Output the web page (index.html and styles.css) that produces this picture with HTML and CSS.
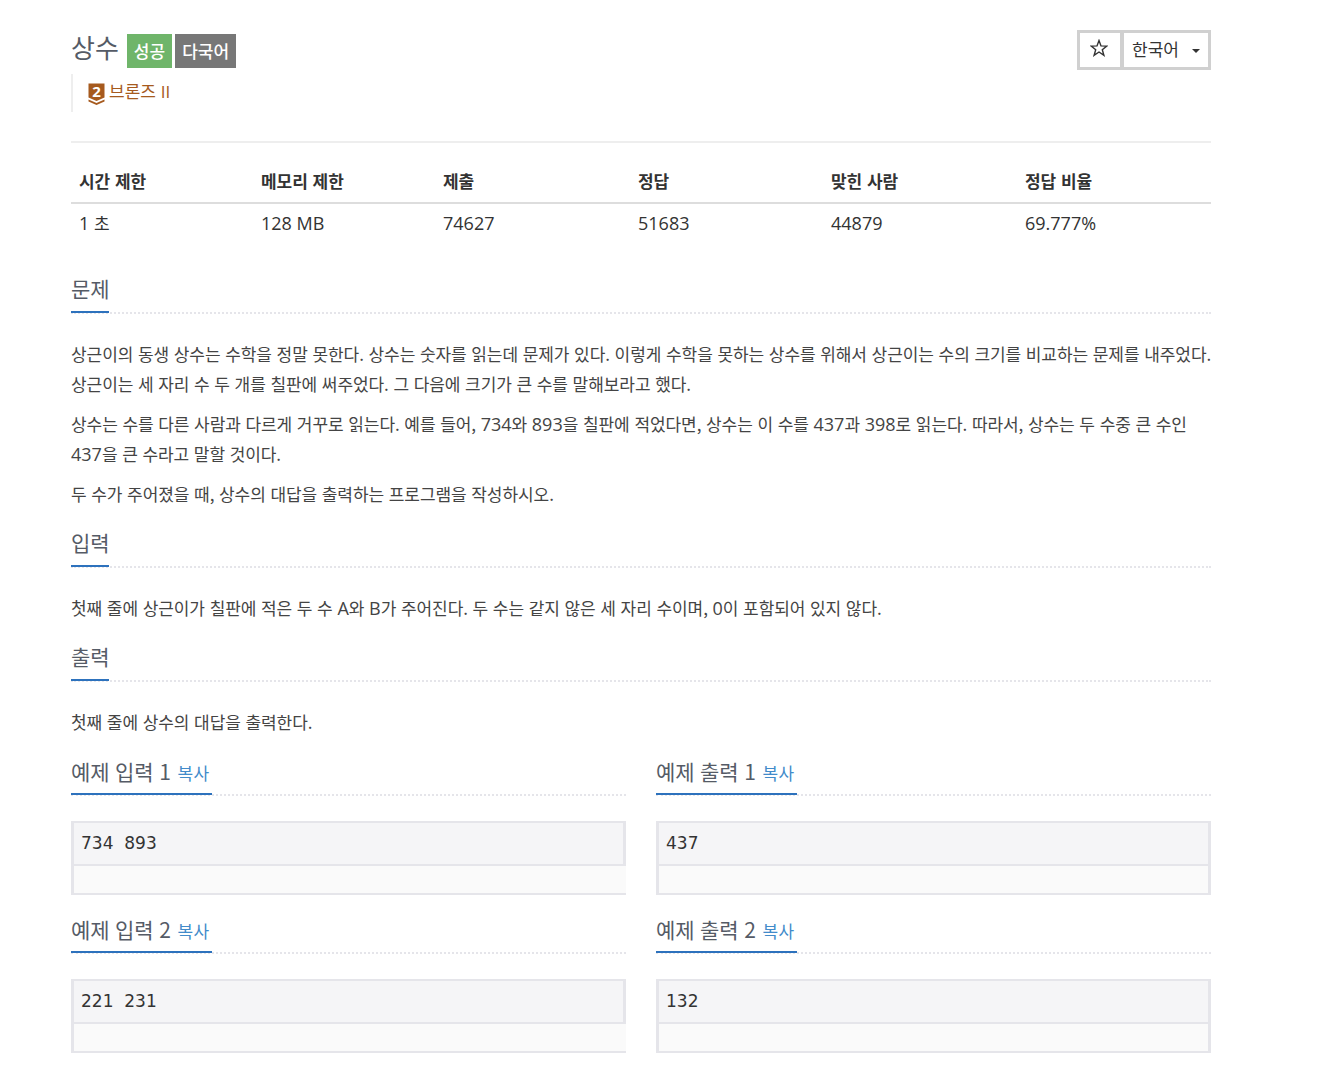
FILE: index.html
```html
<!DOCTYPE html>
<html lang="ko">
<head>
<meta charset="utf-8">
<title>상수</title>
<link rel="stylesheet" href="styles.css">
</head>
<body>
<main class="page">
  <div class="top">
    <div class="title-block">
      <div class="title-row">
        <h1 class="title">상수</h1>
        <span class="label label-success">성공</span>
        <span class="label label-gray">다국어</span>
      </div>
      <div class="tier">
        <svg class="tier-icon" viewBox="0 0 17 22" width="17" height="22" aria-hidden="true">
          <path d="M0.5 0.5H16.5V14.5L8.5 18L0.5 14.5Z" fill="#a65a1e"/>
          <path d="M0.5 16.5L8.5 20L16.5 16.5V18.5L8.5 22L0.5 18.5Z" fill="#a65a1e"/>
          <text x="8.5" y="14" class="tier-num" text-anchor="middle">2</text>
        </svg>
        <span class="tier-text">브론즈 <span class="lat">II</span></span>
      </div>
    </div>
    <div class="actions">
      <button class="btn btn-star" type="button">
        <svg viewBox="0 0 18 18" width="18" height="18" aria-hidden="true"><path d="M9 1.5L11 6.9L16.8 7.1L12.3 10.7L13.9 16.3L9 13L4.1 16.3L5.7 10.7L1.2 7.1L7 6.9Z" fill="none" stroke="#333" stroke-width="1.4" stroke-linejoin="miter"/></svg>
      </button>
      <button class="btn btn-lang" type="button">한국어<span class="caret"></span></button>
    </div>
  </div>

  <table class="info">
    <colgroup><col class="c1"><col class="c2"><col class="c3"><col class="c4"><col class="c5"><col class="c6"></colgroup>
    <thead><tr><th>시간 제한</th><th>메모리 제한</th><th>제출</th><th>정답</th><th>맞힌 사람</th><th>정답 비율</th></tr></thead>
    <tbody><tr><td><span class="lat">1</span> 초</td><td class="lat">128 MB</td><td class="lat">74627</td><td class="lat">51683</td><td class="lat">44879</td><td class="lat">69.777%</td></tr></tbody>
  </table>

  <section class="section s-problem">
    <div class="headline"><h2>문제</h2></div>
    <div class="body">
      <p>상근이의 동생 상수는 수학을 정말 못한다. 상수는 숫자를 읽는데 문제가 있다. 이렇게 수학을 못하는 상수를 위해서 상근이는 수의 크기를 비교하는 문제를 내주었다.<br>상근이는 세 자리 수 두 개를 칠판에 써주었다. 그 다음에 크기가 큰 수를 말해보라고 했다.</p>
      <p>상수는 수를 다른 사람과 다르게 거꾸로 읽는다. 예를 들어, <span class="lat">734</span>와 <span class="lat">893</span>을 칠판에 적었다면, 상수는 이 수를 <span class="lat">437</span>과 <span class="lat">398</span>로 읽는다. 따라서, 상수는 두 수중 큰 수인<br><span class="lat">437</span>을 큰 수라고 말할 것이다.</p>
      <p>두 수가 주어졌을 때, 상수의 대답을 출력하는 프로그램을 작성하시오.</p>
    </div>
  </section>

  <section class="section">
    <div class="headline"><h2>입력</h2></div>
    <div class="body">
      <p>첫째 줄에 상근이가 칠판에 적은 두 수 <span class="lat">A</span>와 <span class="lat">B</span>가 주어진다. 두 수는 같지 않은 세 자리 수이며, <span class="lat">0</span>이 포함되어 있지 않다.</p>
    </div>
  </section>

  <section class="section">
    <div class="headline"><h2>출력</h2></div>
    <div class="body">
      <p>첫째 줄에 상수의 대답을 출력한다.</p>
    </div>
  </section>

  <div class="samples">
    <section class="sample">
      <div class="headline"><h2>예제 입력 1 <a class="copy">복사</a></h2></div>
      <div class="sample-box clip"><pre>734  893</pre><div class="sample-foot"></div></div>
    </section>
    <section class="sample">
      <div class="headline"><h2>예제 출력 1 <a class="copy">복사</a></h2></div>
      <div class="sample-box"><pre>437</pre><div class="sample-foot"></div></div>
    </section>
    <section class="sample">
      <div class="headline"><h2>예제 입력 2 <a class="copy">복사</a></h2></div>
      <div class="sample-box clip"><pre>221  231</pre><div class="sample-foot"></div></div>
    </section>
    <section class="sample">
      <div class="headline"><h2>예제 출력 2 <a class="copy">복사</a></h2></div>
      <div class="sample-box"><pre>132</pre><div class="sample-foot"></div></div>
    </section>
  </div>
</main>
</body>
</html>
```
FILE: styles.css
```css
* { box-sizing: border-box; }
html, body { margin: 0; padding: 0; background: #fff; }
body {
  font-family: "Noto Sans CJK KR", "Open Sans", sans-serif;
  font-size: 17px;
  color: #333;
  line-height: 30px;
}
.lat { font-family: "Open Sans", sans-serif; font-size: 18px; letter-spacing: 0; }
.page { width: 1140px; margin-left: 71px; padding-top: 30px; height: 1066px; overflow: hidden; }
.top { display: flex; justify-content: space-between; align-items: flex-start; height: 113px; border-bottom: 2px solid #eee; }
.title-row { display: flex; align-items: flex-start; height: 38px; }
.title { margin: 0 8px 0 0; font-size: 26px; font-weight: 400; line-height: 34px; color: #555b66; }
.label { display: block; height: 34px; padding: 0 7px; margin: 4px 3px 0 0; font-size: 17px; line-height: 33px; color: #fff; font-weight: 500; }
.label-success { background: #6fb56a; }
.label-gray { background: #777; }
.tier { display: flex; align-items: center; height: 38px; margin-top: 6px; padding-left: 15px; border-left: 2px solid #eee; }
.tier-icon { display: block; margin: 2px 4px 0 0; overflow: visible; }
.tier-num { font: 700 15px "Open Sans", sans-serif; fill: #fff; }
.tier-text { font-size: 17px; color: #a65a1e; line-height: 20px; margin-top: -3px; }
.tier-text .lat { font-size: 17px; font-weight: 500; }
.actions { display: flex; }
.btn { display: flex; align-items: center; height: 40px; background: #fff; border: 3px solid #d0d0d0; font: inherit; color: #333; padding: 0; }
.btn-star { width: 46px; justify-content: center; padding-bottom: 4px; padding-right: 2px; }
.btn-lang { width: 90px; padding-left: 8px; padding-bottom: 3px; font-size: 17px; margin-left: -2px; }
.caret { width: 0; height: 0; margin-left: 13px; margin-top: 4px; border-top: 4px solid #333; border-left: 4px solid transparent; border-right: 4px solid transparent; }

.info { width: 1140px; border-collapse: collapse; table-layout: fixed; margin-top: 16px; }
.c1, .c2 { width: 182px; }
.c3 { width: 195px; }
.c4 { width: 193px; }
.c5 { width: 194px; }
.c6 { width: 194px; }
.info th { text-align: left; padding: 10px 8px; height: 44px; line-height: 22px; font-weight: 700; letter-spacing: -0.03px; border-bottom: 2px solid #ddd; }
.info td { padding: 6px 8px; height: 43px; line-height: 26px; vertical-align: top; }

.s-problem { margin-top: 28px; }
.section + .section { margin-top: 19px; }
.headline { border-bottom: 2px dotted #e5e5ea; height: 40px; }
.headline h2 { display: inline-block; margin: 0; height: 39px; font-size: 21px; font-weight: 400; line-height: 28px; letter-spacing: -0.15px; color: #555b66; border-bottom: 2px solid #2d72bd; }
.sample .headline h2 { line-height: 30px; }
.body { padding-top: 25px; line-height: 30px; color: #444; letter-spacing: -0.07px; }
.body p { margin: 0 0 10px; white-space: nowrap; }
.copy { font-size: 17px; color: #428bca; margin: 0 2px 0 1px; letter-spacing: 0.5px; }

.samples { display: grid; grid-template-columns: 555px 555px; column-gap: 30px; margin-top: 19px; }
.sample { height: 158px; }
.sample-box { margin-top: 25px; height: 74px; }
.sample-box pre { margin: 0; height: 45px; padding: 0 7px; background: #f5f5f7; border: 3px solid #e5e5ea; border-top-width: 2px; border-bottom-width: 2px; font: 17px/41px "DejaVu Sans", sans-serif; color: #333; }
.sample-foot { height: 29px; background: #fafafa; border: 3px solid #e5e5ea; border-top: 0; border-bottom-width: 2px; }
.clip .sample-foot { border-right: 0; }
```
